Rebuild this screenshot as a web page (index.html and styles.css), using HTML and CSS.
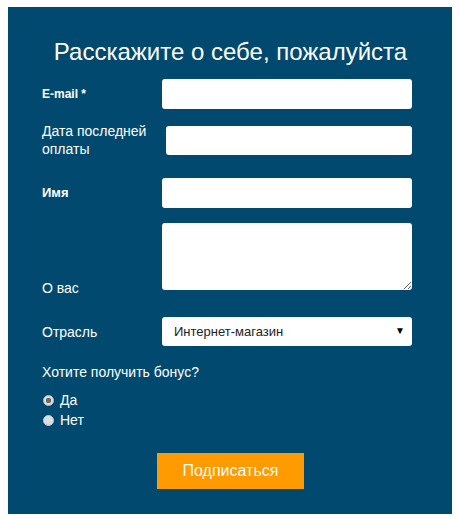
FILE: index.html
```html
<!DOCTYPE html>
<html lang="ru">
<head>
  <meta charset="UTF-8">
  <meta name="viewport" content="width=device-width, initial-scale=1.0">
  <title>Подписка</title>
  <link rel="stylesheet" href="styles.css">
</head>
<body>
  <form class="panel">
    <h1>Расскажите о себе, пожалуйста</h1>

    <div class="row row-email">
      <label for="email" class="strong">E-mail *</label>
      <input type="text" id="email">
    </div>
    <div class="row row-date">
      <label for="paid">Дата последней<br>оплаты</label>
      <input type="text" id="paid" class="shifted">
    </div>
    <div class="row row-name">
      <label for="name" class="strong big">Имя</label>
      <input type="text" id="name">
    </div>
    <div class="row row-about">
      <label for="about">О вас</label>
      <textarea id="about"></textarea>
    </div>
    <div class="row row-branch">
      <label for="branch">Отрасль</label>
      <span class="select-wrap">
        <select id="branch">
          <option>Интернет-магазин</option>
          <option>Блог</option>
          <option>Другое</option>
        </select>
      </span>
    </div>

    <div class="question">Хотите получить бонус?</div>
    <div class="radios">
      <label class="radio"><input type="radio" name="bonus" checked> Да</label>
      <label class="radio"><input type="radio" name="bonus"> Нет</label>
    </div>

    <div class="actions">
      <button type="button" class="submit">Подписаться</button>
    </div>
  </form>
</body>
</html>
```

FILE: styles.css
```css
body {
  margin: 7px 8px;
  font-family: "Liberation Sans", Arial, sans-serif;
  background: #fff;
}
.panel {
  width: 445px;
  height: 507px;
  box-sizing: border-box;
  padding: 31px 41px 0 34px;
  background: #02496f;
  color: #fff;
}
h1 {
  margin: 0 -41px 13px -34px;
  font-size: 24px;
  font-weight: normal;
  line-height: 28px;
  text-align: center;
}
.row {
  display: flex;
  align-items: center;
}
.row label {
  flex: 0 0 120px;
  font-size: 14px;
  line-height: 18px;
}
.row label.strong {
  font-size: 12px;
  font-weight: bold;
}
.row label.big {
  font-size: 13px;
}
.row input[type="text"], .row textarea, .row select {
  width: 250px;
  height: 30px;
  box-sizing: border-box;
  border: none;
  border-radius: 3px;
  background: #fff;
  font-family: inherit;
  font-size: 13px;
  padding: 4px 8px;
}
.row input.shifted {
  margin-left: 4px;
  height: 29px;
}
.row-date { margin-top: 13px; }
.row-name { margin-top: 20px; }
.row-about {
  margin-top: 15px;
  align-items: flex-end;
}
.row textarea {
  height: 67px;
  margin-bottom: 7px;
  resize: both;
}
.row-branch { margin-top: 20px; }
.select-wrap {
  position: relative;
  display: block;
}
.row select {
  display: block;
  height: 29px;
  padding: 0 12px;
  color: #222;
  appearance: none;
  -webkit-appearance: none;
}
.select-wrap::after {
  content: "\25BC";
  position: absolute;
  right: 7px;
  top: 8px;
  font-size: 10px;
  color: #000;
  pointer-events: none;
}
.question {
  margin-top: 17px;
  font-size: 14px;
  line-height: 18px;
}
.radios {
  margin-top: 9px;
}
.radio {
  display: flex;
  align-items: center;
  font-size: 14px;
  line-height: 20px;
}
.radio input {
  appearance: none;
  -webkit-appearance: none;
  width: 11px;
  height: 11px;
  margin: 0 6px 0 1px;
  border-radius: 50%;
  background: #dedede;
  border: 1px solid #c8c8c8;
  box-sizing: border-box;
}
.radio input:checked {
  background: radial-gradient(circle, #6e6a66 0 2.5px, #dedede 3px);
}
.actions {
  margin-top: 23px;
  padding-left: 115px;
}
.submit {
  width: 147px;
  height: 36px;
  border: none;
  background: #ff9a00;
  color: #fff;
  font-family: inherit;
  font-size: 16px;
}
```
